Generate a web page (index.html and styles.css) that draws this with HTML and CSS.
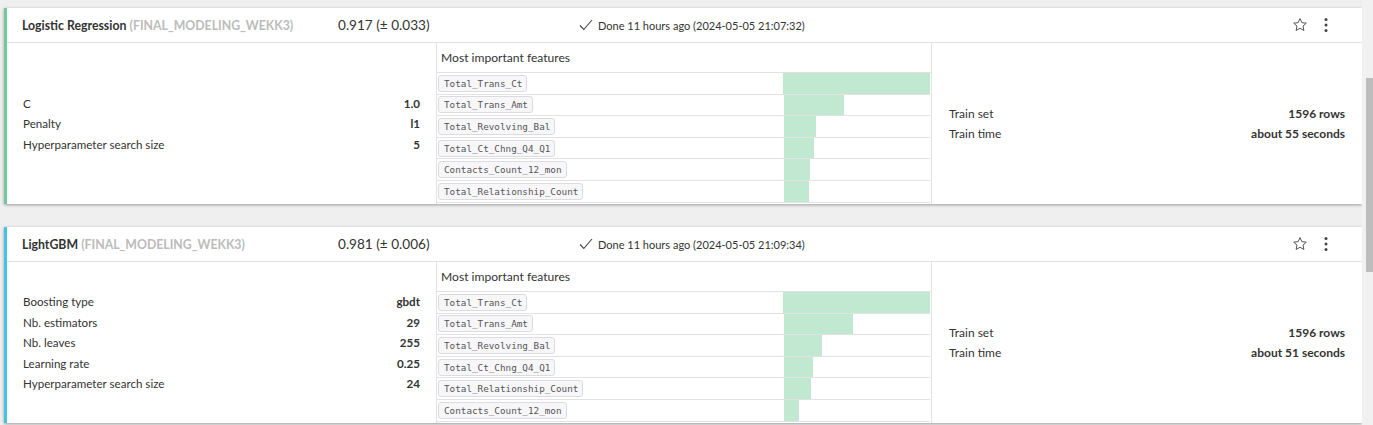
FILE: index.html
```html
<!DOCTYPE html>
<html>
<head>
<meta charset="utf-8">
<link rel="stylesheet" href="styles.css">
</head>
<body>
<div class="page">
  <div class="card green">
    <div class="head">
      <div class="title"><b>Logistic Regression</b> <span class="proj">(FINAL_MODELING_WEKK3)</span></div>
      <div class="score">0.917 (± 0.033)</div>
      <div class="done"><svg class="check" width="14" height="12" viewBox="0 0 14 12"><path d="M1 6.5 L4.8 10.5 L13 1" fill="none" stroke="#444" stroke-width="1.1"/></svg>Done 11 hours ago (2024-05-05 21:07:32)</div>
      <div class="icons">
        <svg width="16" height="16" viewBox="0 0 16 16"><path d="M8 1.6 L9.9 5.7 L14.3 6.1 L11 9.1 L11.9 13.5 L8 11.3 L4.1 13.5 L5 9.1 L1.7 6.1 L6.1 5.7 Z" fill="none" stroke="#555" stroke-width="1" stroke-linejoin="round"/></svg>
        <svg width="6" height="16" viewBox="0 0 6 16"><circle cx="3" cy="2.5" r="1.5" fill="#444"/><circle cx="3" cy="8" r="1.5" fill="#444"/><circle cx="3" cy="13.5" r="1.5" fill="#444"/></svg>
      </div>
    </div>
    <div class="body">
      <div class="params">
        <div class="row"><span>C</span><b>1.0</b></div>
        <div class="row"><span>Penalty</span><b>l1</b></div>
        <div class="row"><span>Hyperparameter search size</span><b>5</b></div>
      </div>
      <div class="features">
        <div class="ftitle">Most important features</div>
        <div class="frow"><div class="fname"><code>Total_Trans_Ct</code></div><div class="fbar"><i style="width:147px"></i></div></div>
        <div class="frow"><div class="fname"><code>Total_Trans_Amt</code></div><div class="fbar"><i style="width:60px"></i></div></div>
        <div class="frow"><div class="fname"><code>Total_Revolving_Bal</code></div><div class="fbar"><i style="width:32px"></i></div></div>
        <div class="frow"><div class="fname"><code>Total_Ct_Chng_Q4_Q1</code></div><div class="fbar"><i style="width:30px"></i></div></div>
        <div class="frow"><div class="fname"><code>Contacts_Count_12_mon</code></div><div class="fbar"><i style="width:26px"></i></div></div>
        <div class="frow"><div class="fname"><code>Total_Relationship_Count</code></div><div class="fbar"><i style="width:25px"></i></div></div>
      </div>
      <div class="params train">
        <div class="row"><span>Train set</span><b>1596 rows</b></div>
        <div class="row"><span>Train time</span><b>about 55 seconds</b></div>
      </div>
    </div>
  </div>

  <div class="card blue">
    <div class="head">
      <div class="title"><b>LightGBM</b> <span class="proj">(FINAL_MODELING_WEKK3)</span></div>
      <div class="score">0.981 (± 0.006)</div>
      <div class="done"><svg class="check" width="14" height="12" viewBox="0 0 14 12"><path d="M1 6.5 L4.8 10.5 L13 1" fill="none" stroke="#444" stroke-width="1.1"/></svg>Done 11 hours ago (2024-05-05 21:09:34)</div>
      <div class="icons">
        <svg width="16" height="16" viewBox="0 0 16 16"><path d="M8 1.6 L9.9 5.7 L14.3 6.1 L11 9.1 L11.9 13.5 L8 11.3 L4.1 13.5 L5 9.1 L1.7 6.1 L6.1 5.7 Z" fill="none" stroke="#555" stroke-width="1" stroke-linejoin="round"/></svg>
        <svg width="6" height="16" viewBox="0 0 6 16"><circle cx="3" cy="2.5" r="1.5" fill="#444"/><circle cx="3" cy="8" r="1.5" fill="#444"/><circle cx="3" cy="13.5" r="1.5" fill="#444"/></svg>
      </div>
    </div>
    <div class="body">
      <div class="params">
        <div class="row"><span>Boosting type</span><b>gbdt</b></div>
        <div class="row"><span>Nb. estimators</span><b>29</b></div>
        <div class="row"><span>Nb. leaves</span><b>255</b></div>
        <div class="row"><span>Learning rate</span><b>0.25</b></div>
        <div class="row"><span>Hyperparameter search size</span><b>24</b></div>
      </div>
      <div class="features">
        <div class="ftitle">Most important features</div>
        <div class="frow"><div class="fname"><code>Total_Trans_Ct</code></div><div class="fbar"><i style="width:147px"></i></div></div>
        <div class="frow"><div class="fname"><code>Total_Trans_Amt</code></div><div class="fbar"><i style="width:69px"></i></div></div>
        <div class="frow"><div class="fname"><code>Total_Revolving_Bal</code></div><div class="fbar"><i style="width:38px"></i></div></div>
        <div class="frow"><div class="fname"><code>Total_Ct_Chng_Q4_Q1</code></div><div class="fbar"><i style="width:29px"></i></div></div>
        <div class="frow"><div class="fname"><code>Total_Relationship_Count</code></div><div class="fbar"><i style="width:27px"></i></div></div>
        <div class="frow"><div class="fname"><code>Contacts_Count_12_mon</code></div><div class="fbar"><i style="width:15px"></i></div></div>
      </div>
      <div class="params train">
        <div class="row"><span>Train set</span><b>1596 rows</b></div>
        <div class="row"><span>Train time</span><b>about 51 seconds</b></div>
      </div>
    </div>
  </div>
</div>
<div class="scrollbar"><div class="thumb"></div></div>
</body>
</html>
```
FILE: styles.css
```css
html, body {
  margin: 0;
  padding: 0;
  height: 425px;
  overflow: hidden;
  background: #efefef;
  font-family: Lato, "Noto Sans", sans-serif;
  font-size: 12px;
  color: #333;
}
.page {
  padding: 8px 11px 0 4px;
  display: flex;
  flex-direction: column;
  gap: 23px;
}
.card {
  background: #fff;
  border-left: 3px solid #6fcb9f;
  box-shadow: 0 1px 3px rgba(0,0,0,0.35);
}
.card.blue { border-left-color: #45c3e2; }
.head {
  height: 34px;
  border-bottom: 1px solid #e2e2e2;
  display: grid;
  grid-template-columns: 316px 241px 1fr auto;
  align-items: center;
  padding-left: 15px;
  padding-right: 33px;
}
.title { font-size: 12.3px; color: #333; white-space: nowrap; }
.title b { font-weight: 700; }
.proj { color: #bbb; font-weight: 700; }
.score { font-size: 13.6px; color: #333; }
.done { display: flex; align-items: center; font-size: 11px; color: #333; }
.check { margin-right: 5px; margin-top: -1px; }
.icons { display: flex; align-items: center; gap: 15px; }
.body {
  height: 161px;
  overflow: hidden;
  display: grid;
  grid-template-columns: 429px 496px 1fr;
  grid-template-rows: 161px;
}
.params {
  padding: 0 16px;
  font-size: 11.6px;
  display: flex;
  flex-direction: column;
  justify-content: center;
}
.params.train { padding: 0 17px; font-size: 12px; }
.row {
  display: flex;
  justify-content: space-between;
  height: 20.5px;
  align-items: center;
}
.row b { font-weight: 700; }
.features {
  border-left: 1px solid #e2e2e2;
  border-right: 1px solid #e2e2e2;
  overflow: hidden;
}
.ftitle {
  height: 29px;
  line-height: 29px;
  padding-left: 4px;
  font-size: 12.1px;
  color: #333;
  border-bottom: 1px solid #e2e2e2;
}
.frow {
  display: flex;
  height: 21.6px;
  border-bottom: 1px solid #e2e2e2;
  margin-right: 1px;
  box-sizing: border-box;
}
.fname {
  width: 346px;
  display: flex;
  align-items: center;
  padding-left: 1px;
}
.fname code {
  font-family: "DejaVu Sans Mono", monospace;
  font-size: 9.3px;
  color: #555;
  background: #f7f7fa;
  border: 1px solid #dcdce0;
  border-radius: 3px;
  padding: 2px 4px 2px 5px;
  line-height: 11px;
}
.fbar { flex: 1; display: flex; }
.fbar i { display: block; background: #c1e8d0; height: 100%; }
.scrollbar {
  position: absolute;
  top: 0;
  right: 0;
  width: 11px;
  height: 425px;
  background: #f1f1f1;
}
.thumb {
  position: absolute;
  top: 78px;
  left: 4px;
  width: 7px;
  height: 194px;
  background: #bdbdbd;
}
```
